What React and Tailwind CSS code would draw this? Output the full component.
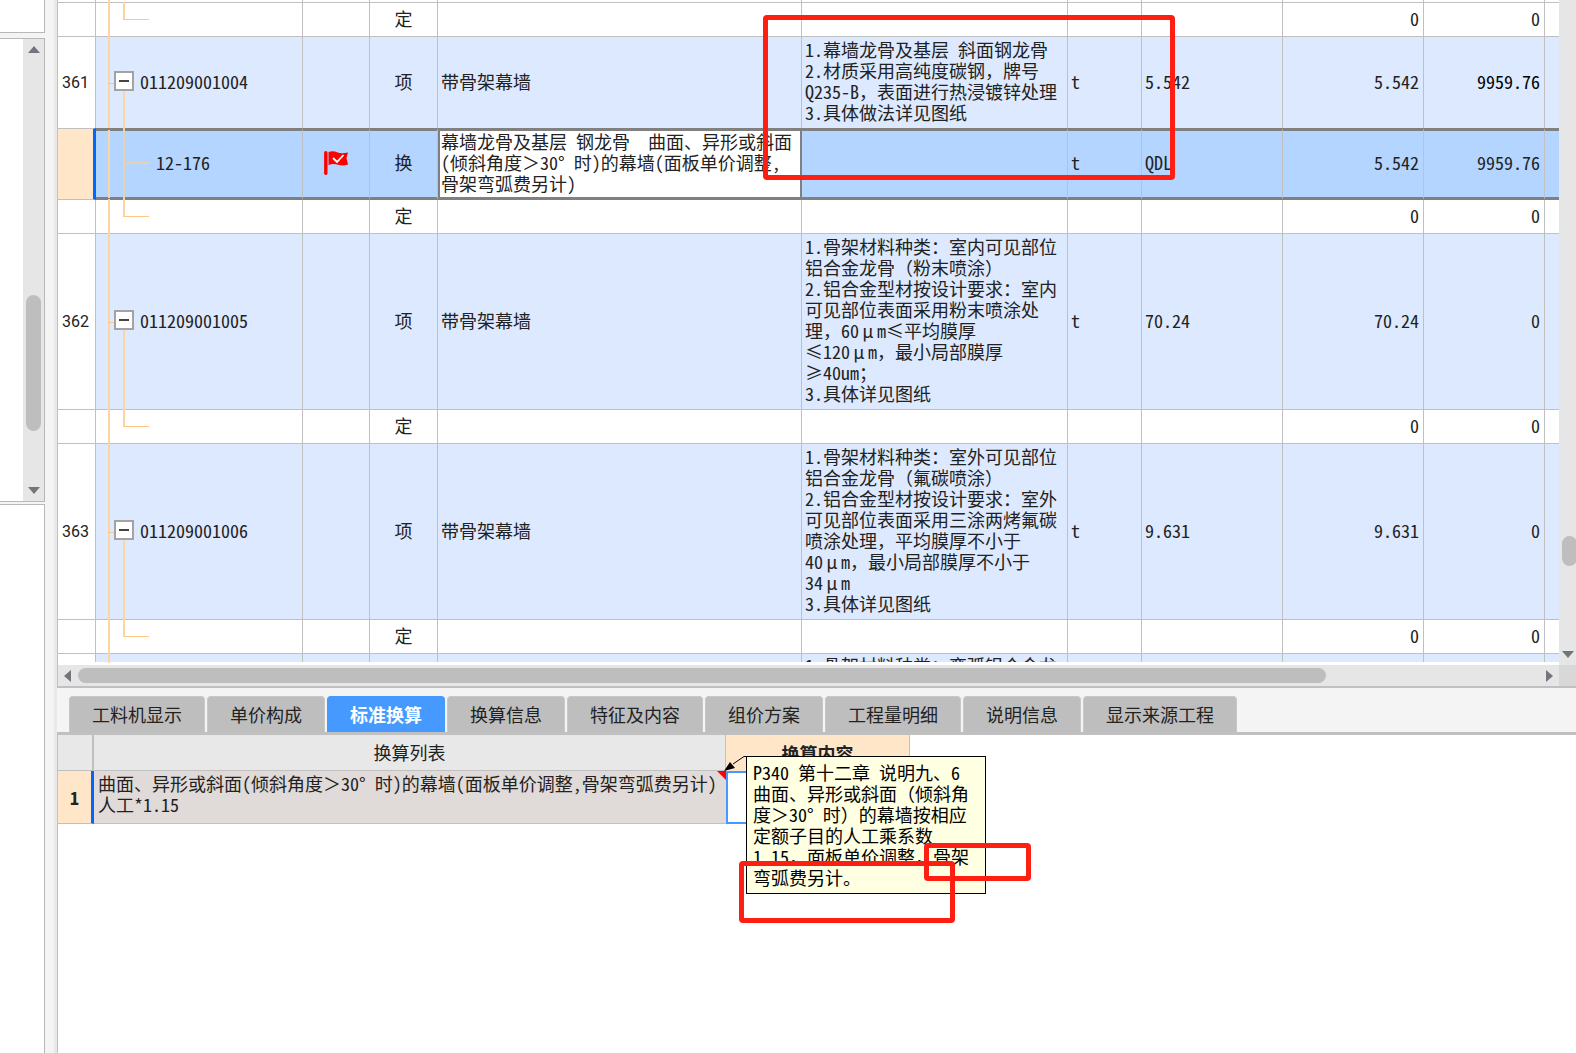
import clsx from 'clsx'

const rows = [
    { kind: 'edge' },
    { kind: 'fixed' },
    {
        kind: 'item',
        no: '361',
        code: '011209001004',
        name: '带骨架幕墙',
        feature: '1.幕墙龙骨及基层 斜面钢龙骨\n2.材质采用高纯度碳钢，牌号\nQ235-B，表面进行热浸镀锌处理\n3.具体做法详见图纸',
        unit: 't',
        expr: '5.542',
        qty: '5.542',
        price: '9959.76',
        short: true,
    },
    {
        kind: 'selected',
        code: '12-176',
        name: '幕墙龙骨及基层 钢龙骨  曲面、异形或斜面\n(倾斜角度＞30° 时)的幕墙(面板单价调整,\n骨架弯弧费另计)',
        unit: 't',
        expr: 'QDL',
        qty: '5.542',
        price: '9959.76',
    },
    { kind: 'fixed' },
    {
        kind: 'item',
        no: '362',
        code: '011209001005',
        name: '带骨架幕墙',
        feature:
            '1.骨架材料种类：室内可见部位\n铝合金龙骨（粉末喷涂）\n2.铝合金型材按设计要求：室内\n可见部位表面采用粉末喷涂处\n理，60μm≤平均膜厚\n≤120μm，最小局部膜厚\n≥40um；\n3.具体详见图纸',
        unit: 't',
        expr: '70.24',
        qty: '70.24',
        price: '0',
    },
    { kind: 'fixed' },
    {
        kind: 'item',
        no: '363',
        code: '011209001006',
        name: '带骨架幕墙',
        feature:
            '1.骨架材料种类：室外可见部位\n铝合金龙骨（氟碳喷涂）\n2.铝合金型材按设计要求：室外\n可见部位表面采用三涂两烤氟碳\n喷涂处理，平均膜厚不小于\n40μm，最小局部膜厚不小于\n34μm\n3.具体详见图纸',
        unit: 't',
        expr: '9.631',
        qty: '9.631',
        price: '0',
    },
    { kind: 'fixed' },
]

const tabs = ['工料机显示', '单价构成', '标准换算', '换算信息', '特征及内容', '组价方案', '工程量明细', '说明信息', '显示来源工程']

const arrows = { up: '0,7 6,0 12,7', down: '0,0 12,0 6,7', left: '7,0 7,12 0,6', right: '0,0 7,6 0,12' }

/* the page sets latin half-width, these signs have to stay full-width */
function Text({ children = '' }) {
    return children.split('\n').map((line, n) => (
        <span key={n} className="block">
            {line.split(/([，（）＞μ])/).map((part, i) =>
                i % 2 ? (
                    <span
                        key={i}
                        className={clsx("[font-feature-settings:'fwid']", part === 'μ' && 'inline-block w-[18px] text-center')}
                    >
                        {part}
                    </span>
                ) : (
                    part
                ),
            )}
        </span>
    ))
}

function Arrow({ dir }) {
    const flat = dir === 'up' || dir === 'down'
    return (
        <svg width={flat ? 12 : 7} height={flat ? 7 : 12} className="shrink-0" aria-hidden="true">
            <polygon points={arrows[dir]} fill="#74747c" />
        </svg>
    )
}

function Flag() {
    return (
        <svg width="24" height="24" viewBox="0 0 24 24" className="mx-auto" aria-hidden="true">
            <path d="M1.8 1.800v20.500" stroke="#f00" strokeWidth="3.4" strokeLinecap="round" />
            <path d="M4.500 1c3-1 6-1 8.500.2 3 1.300 6 1.300 11 .3L22.500 7l1.500 6.500c-4 1.500-7 1.200-10 .2-3-1-6-1-9.500.3z" fill="#f00" />
            <path d="M9 7l4 4 6.500-7" fill="none" stroke="#fff" strokeWidth="1.8" />
        </svg>
    )
}

/* orange guide lines of the tree column */
function TreeLines({ kind }) {
    return (
        <span aria-hidden="true">
            <span className="absolute left-3 -top-px -bottom-px w-[2px] bg-[#fcd5a0]" />
            {kind === 'item' && (
                <>
                    <span className="absolute left-3 top-1/2 h-px w-[6px] bg-[#ffc985]" />
                    <span className="absolute left-[27px] top-1/2 -bottom-px w-[2px] bg-[#fcd5a0]" />
                </>
            )}
            {kind === 'selected' && (
                <>
                    <span className="absolute left-[27px] -top-[3px] -bottom-[3px] w-[2px] bg-[#e6d2ae]" />
                    <span className="absolute left-[27px] bottom-1/2 h-[2px] w-[26px] bg-[#e6d2ae]" />
                </>
            )}
            {kind === 'fixed' && (
                <>
                    <span className="absolute left-[27px] -top-px bottom-1/2 w-[2px] bg-[#fcd5a0]" />
                    <span className="absolute left-[27px] bottom-1/2 h-px w-[26px] bg-[#ffc985]" />
                </>
            )}
        </span>
    )
}

function Row({ row }) {
    const { kind } = row
    const selected = kind === 'selected'
    const item = kind === 'item'
    const marks = { item: '项', selected: '换', fixed: '定' }

    const cell = clsx(
        'border-r border-[#c0c0c0] px-[3px] whitespace-pre',
        kind !== 'edge' && 'pb-[3px]',
        selected ? 'border-t-[3px] border-b-[3px] border-t-[#808080] border-b-[#808080] bg-[#b3d5ff]' : !row.short && 'border-b',
        item && 'bg-[#dce9fe]',
    )
    const height = {
        edge: 'h-[3px]',
        fixed: 'h-[34px]',
        selected: 'h-[72px]',
        item: row.short ? 'h-[91px]' : 'h-[176px]',
    }[kind]
    const zero = kind === 'fixed' ? '0' : ''

    return (
        <tr className={height}>
            <td
                className={clsx(
                    'border-b border-r border-[#c0c0c0] pl-1 font-[Roboto,sans-serif] text-base',
                    selected && 'border-t border-r-[3px] border-r-[#0066ff] bg-[#ffe6c8]',
                    row.short && 'border-b-0',
                )}
            >
                {row.no}
            </td>
            <td className={clsx(cell, 'relative')}>
                <TreeLines kind={kind} />
                {item && (
                    <div className="relative flex items-center gap-[6px] pl-[15px]">
                        <button
                            type="button"
                            aria-label="折叠"
                            className="flex size-5 items-center justify-center border-2 border-[#a3a3a3] bg-white"
                        >
                            <span className="h-[2px] w-[10px] bg-[#444]" />
                        </button>
                        {row.code}
                    </div>
                )}
                {selected && <div className="pl-[57px]">{row.code}</div>}
            </td>
            <td className={cell}>{selected && <Flag />}</td>
            <td className={clsx(cell, 'text-center')}>{marks[kind]}</td>
            <td className={clsx(cell, selected && 'border-r-2 border-l-2 border-l-[#808080] border-r-[#808080] bg-white pl-px')}>
                {row.name && <Text>{row.name}</Text>}
            </td>
            <td className={cell}>{row.feature && <Text>{row.feature}</Text>}</td>
            <td className={cell}>{row.unit}</td>
            <td className={cell}>{row.expr}</td>
            <td className={clsx(cell, 'pr-1 text-right')}>{row.qty || zero}</td>
            <td className={clsx(cell, 'pr-1 text-right', row.short && 'text-black')}>{row.price || zero}</td>
            <td className={clsx(cell, 'border-r-0')} />
        </tr>
    )
}

function QuotaGrid() {
    return (
        <div className="flex border-l border-[#c0c0c0]">
            <div className="min-w-0 flex-1">
                <table className="w-full table-fixed border-separate border-spacing-0 bg-white">
                    <colgroup>
                        <col className="w-[38px]" />
                        <col className="w-[207px]" />
                        <col className="w-[67px]" />
                        <col className="w-[68px]" />
                        <col className="w-[364px]" />
                        <col className="w-[266px]" />
                        <col className="w-[74px]" />
                        <col className="w-[141px]" />
                        <col className="w-[141px]" />
                        <col className="w-[121px]" />
                        <col />
                    </colgroup>
                    <tbody>
                        {rows.map((row, i) => (
                            <Row key={i} row={row} />
                        ))}
                        {/* next item, cut off by the scrollbar */}
                        <tr className="h-2">
                            <td className="border-r border-[#c0c0c0]" />
                            <td className="relative border-r border-[#c0c0c0] bg-[#dce9fe]">
                                <TreeLines kind="edge" />
                            </td>
                            <td className="border-r border-[#c0c0c0] bg-[#dce9fe]" />
                            <td className="border-r border-[#c0c0c0] bg-[#dce9fe]" />
                            <td className="border-r border-[#c0c0c0] bg-[#dce9fe]" />
                            <td className="border-r border-[#c0c0c0] bg-[#dce9fe] px-[3px]">
                                <div className="h-2 overflow-hidden pt-px whitespace-pre">1.骨架材料种类：弯弧铝合金龙</div>
                            </td>
                            <td className="border-r border-[#c0c0c0] bg-[#dce9fe]" />
                            <td className="border-r border-[#c0c0c0] bg-[#dce9fe]" />
                            <td className="border-r border-[#c0c0c0] bg-[#dce9fe]" />
                            <td className="border-r border-[#c0c0c0] bg-[#dce9fe]" />
                            <td className="bg-[#dce9fe]" />
                        </tr>
                    </tbody>
                </table>
                <div className="flex h-6 items-center border-t-[3px] border-white bg-[#e6e6e6] px-[6px]">
                    <Arrow dir="left" />
                    <div className="ml-[7px] flex flex-1">
                        <div className="h-[15px] w-[85%] rounded-full bg-[#bebebe]" />
                    </div>
                    <Arrow dir="right" />
                </div>
            </div>
            <div className="flex w-[17px] flex-col overflow-hidden bg-[#e6e6e6] pl-[3px]">
                <div className="grow-[536]" />
                <div className="h-[30px] w-[15px] rounded-full bg-[#bebebe]" />
                <div className="grow-[85]" />
                <Arrow dir="down" />
                <div className="mt-[7px] -ml-[3px] h-[21px] bg-[#d8d8d8]" />
            </div>
        </div>
    )
}

function Note() {
    return (
        <div
            role="tooltip"
            className="absolute left-5 -top-[15px] z-10 w-[240px] border border-black bg-[#ffffe1] px-[6px] py-[5px] text-left whitespace-pre text-black"
        >
            <Text>
                {'P340 第十二章 说明九、6\n曲面、异形或斜面（倾斜角\n度＞30° 时）的幕墙按相应\n定额子目的人工乘系数\n1.15，面板单价调整，骨架\n弯弧费另计。'}
            </Text>
            <svg width="24" height="16" className="absolute -left-[23px] -top-px" aria-hidden="true">
                <path d="M23 .5h-3L9 8" fill="none" stroke="#000" />
                <path d="M0 15L6 6l5 6z" fill="#000" />
            </svg>
        </div>
    )
}

function Conversion() {
    return (
        <table className="w-[852px] table-fixed border-separate border-spacing-0">
            <colgroup>
                <col className="w-9" />
                <col className="w-[632px]" />
                <col />
            </colgroup>
            <thead>
                <tr className="h-9">
                    <th className="border-b border-r-2 border-[#c0c0c0] bg-[#e8e8e8]" />
                    <th className="border-b border-r border-[#c0c0c0] bg-[#e8e8e8] font-normal">换算列表</th>
                    <th className="border-r border-[#c0c0c0] bg-[#ffe6c8] font-bold">换算内容</th>
                </tr>
            </thead>
            <tbody>
                <tr className="h-[53px]">
                    <th className="border-b border-r-[3px] border-b-[#c0c0c0] border-r-[#0066ff] bg-[#ffe6c8] font-bold">1</th>
                    <td className="relative border-b border-[#c0c0c0] bg-[#e0dad8] pb-[6px] pl-1 align-middle whitespace-pre">
                        <Text>{'曲面、异形或斜面(倾斜角度＞30° 时)的幕墙(面板单价调整,骨架弯弧费另计)\n人工*1.15'}</Text>
                        <svg width="9" height="9" className="absolute right-0 top-0" aria-hidden="true">
                            <polygon points="0,0 9,0 9,9" fill="#f00" />
                        </svg>
                    </td>
                    <td className="relative p-0">
                        <input aria-label="换算内容" className="block h-[53px] w-full border-2 border-[#4599ff] bg-white px-1 outline-none" />
                        <Note />
                    </td>
                </tr>
            </tbody>
        </table>
    )
}

function SidePane() {
    return (
        <aside className="flex w-[45px] shrink-0 flex-col">
            <div className="h-[33px] border-r border-b border-[#b8b8b8] bg-white" />
            <div className="mt-[5px] flex h-[464px] justify-end border-y border-r border-[#b8b8b8] bg-white">
                <div className="flex w-[21px] flex-col items-center bg-[#e6e6e6] py-[7px]">
                    <Arrow dir="up" />
                    <div className="grow-[242]" />
                    <div className="h-[136px] w-[15px] rounded-full bg-[#bebebe]" />
                    <div className="grow-[56]" />
                    <Arrow dir="down" />
                </div>
            </div>
            <div className="mt-[2px] flex-1 border-t border-r border-[#b8b8b8] bg-white" />
        </aside>
    )
}

export default function App() {
    return (
        <div className="relative flex min-h-screen w-full overflow-hidden bg-[#f4f4f4] font-['Noto_Sans_CJK_SC',sans-serif] text-lg leading-[21px] text-[#222] [font-feature-settings:'hwid']">
            <SidePane />
            <div className="w-3 shrink-0 border-r-[3px] border-[#e9e9e9]" />
            <main className="flex min-w-0 flex-1 flex-col">
                <QuotaGrid />
                <div role="tablist" className="flex h-[49px] items-end gap-[2px] border-t-2 border-b-[3px] border-[#c0c0c0] pl-3">
                    {tabs.map((tab) => (
                        <button
                            key={tab}
                            type="button"
                            role="tab"
                            aria-selected={tab === '标准换算'}
                            className={clsx(
                                'h-9 rounded-t border border-b-0 px-[22px] whitespace-nowrap',
                                tab === '标准换算'
                                    ? 'border-[#4599ff] bg-[#4599ff] font-bold text-white'
                                    : 'border-[#c8c8c8] bg-[#bebebe]',
                            )}
                        >
                            {tab}
                        </button>
                    ))}
                </div>
                <div className="flex-1 border-l border-[#c0c0c0] bg-white">
                    <Conversion />
                </div>
            </main>

            {/* red review marks */}
            <div className="pointer-events-none absolute left-[763px] top-[15px] z-20 h-[165px] w-[412px] rounded border-[5px] border-[#ff1f12]" />
            <div className="pointer-events-none absolute left-[739px] top-[861px] z-20 h-[62px] w-[216px] rounded border-[5px] border-[#ff1f12]" />
            <div className="pointer-events-none absolute left-[924px] top-[843px] z-20 h-[38px] w-[107px] rounded border-[5px] border-[#ff1f12]" />
        </div>
    )
}
